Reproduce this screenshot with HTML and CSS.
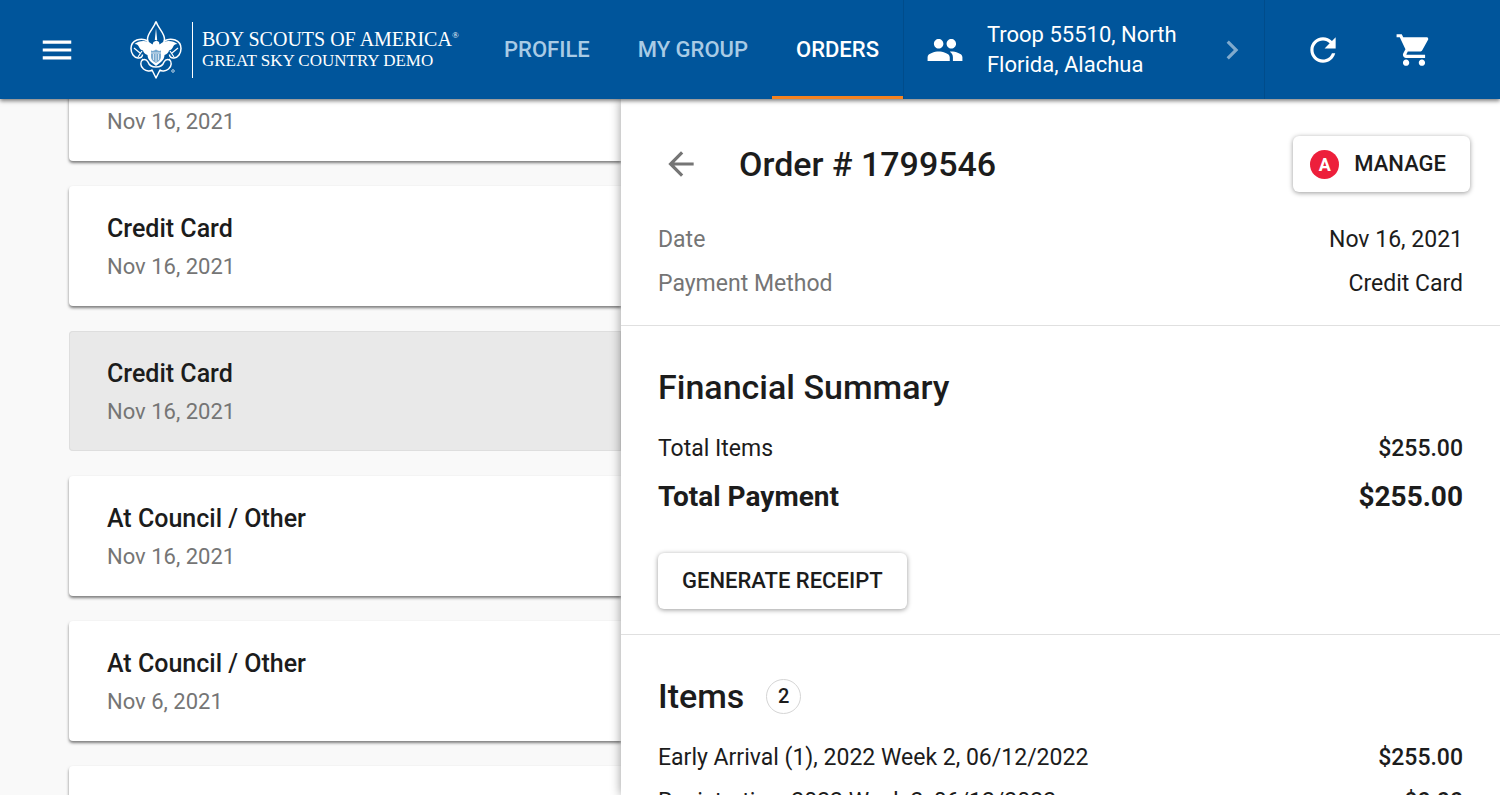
FILE: index.html
```html
<!DOCTYPE html>
<html lang="en">
<head>
<meta charset="utf-8">
<meta name="viewport" content="width=device-width, initial-scale=1">
<title>Order # 1799546</title>
<link rel="stylesheet" href="styles.css">
</head>
<body>
<header class="topbar">
  <button class="icon-button menu" type="button" aria-label="Menu">
    <svg class="icon" viewBox="0 0 24 24"><path d="M3 18h18v-2H3v2zm0-5h18v-2H3v2zm0-7v2h18V6H3z"/></svg>
  </button>
  <a class="brand" href="#">
    <svg class="emblem" viewBox="0 0 52 60" aria-hidden="true">
      <g fill="none" stroke="#fff" stroke-width="1.500" stroke-linejoin="round">
        <path d="M26 1.500C24 8 17.500 13 17.500 19c0 2 .5 3.500 1.500 5M26 1.500C28 8 34.500 13 34.500 19c0 2-.5 3.500-1.500 5"/>
        <path d="M18 21C11 17 1 20 1 28.500c0 5 3 9 7 9.500 3 .3 4.500-1.500 4.500-3.500M34 21c7-4 17-1 17 7.500 0 5-3 9-7 9.500-3 .3-4.500-1.500-4.500-3.500"/>
        <path d="M13 39c-3 3-3 7 .5 10 3 2.500 7 2.500 8.500 1l4 8 4-8c1.500 1.500 5.500 1.500 8.500-1 3.500-3 3.500-7 .5-10"/>
        <path d="M12 40c3-1 5 0 6 2 1 3 4 5 8 5s7-2 8-5c1-2 3-3 6-2"/>
        <path d="M4 28l6 5M8 37l4-6M48 28l-6 5M44 37l-4-6" stroke-width="1.200"/>
      </g>
      <path fill="#fff" d="M26 8l1.200 12h-2.400zM4.500 24c5-4 13-4 18 .5l1-2.500 3-1.500 2.500 1.500.500 2.500c5-4.500 13-4.500 18-.5-3 0-4 1.500-4.500 3s-2 3-4 3.500c-.5 2-2 4-4.500 4.500 0 3-1.500 5-3.500 7L26 46l-5-4c-2-2-3.500-4-3.500-7-2.500-.5-4-2.500-4.500-4.500-2-.5-3.500-2-4-3.500s-1.500-3-4.500-3z"/>
      <path fill="#78a9cf" d="M21 30.500c2 1 3 .2 5-1 2 1.200 3 2 5 1V37c0 3-3 5-5 6-2-1-5-3-5-6z"/>
      <path fill="none" stroke="#fff" stroke-width=".7" d="M21 33h10M23.500 34v6M26 34v8M28.500 34v6"/>
      <circle cx="43" cy="51" r="1.300" fill="none" stroke="#fff" stroke-width=".7"/>
    </svg>
    <span class="brand-text">
      <span class="brand-name">BOY SCOUTS OF AMERICA<sup class="mark">®</sup></span>
      <span class="brand-unit">GREAT SKY COUNTRY DEMO</span>
    </span>
  </a>
  <nav class="tabs">
    <a class="tab" href="#">PROFILE</a>
    <a class="tab" href="#">MY GROUP</a>
    <a class="tab tab-active" href="#" aria-current="page">ORDERS</a>
  </nav>
  <button class="group" type="button">
    <svg class="icon" viewBox="0 0 24 24"><path d="M16 11c1.660 0 2.990-1.340 2.990-3S17.660 5 16 5s-3 1.340-3 3 1.340 3 3 3zm-8 0c1.660 0 2.990-1.340 2.990-3S9.660 5 8 5 5 6.340 5 8s1.340 3 3 3zm0 2c-2.330 0-7 1.170-7 3.500V19h14v-2.500C15 14.170 10.330 13 8 13zm8 0c-.29 0-.62.020-.97.050 1.160.84 1.970 1.970 1.970 3.450V19h6v-2.500c0-2.330-4.670-3.500-7-3.500z"/></svg>
    <span class="group-name">Troop 55510, North Florida, Alachua</span>
    <svg class="icon chevron" viewBox="0 0 24 24"><path d="M10 6L8.590 7.410 13.170 12l-4.580 4.590L10 18l6-6z"/></svg>
  </button>
  <div class="actions">
    <button class="icon-button" type="button" aria-label="Refresh">
      <svg class="icon" viewBox="0 0 24 24"><path d="M17.650 6.350C16.200 4.900 14.210 4 12 4c-4.420 0-7.990 3.580-7.990 8s3.570 8 7.990 8c3.730 0 6.840-2.550 7.730-6h-2.080c-.82 2.330-3.040 4-5.650 4-3.310 0-6-2.690-6-6s2.690-6 6-6c1.660 0 3.140.69 4.220 1.780L13 11h7V4l-2.350 2.350z"/></svg>
    </button>
    <button class="icon-button" type="button" aria-label="Cart">
      <svg class="icon" viewBox="0 0 24 24"><path d="M7 18c-1.100 0-1.990.9-1.990 2S5.900 22 7 22s2-.9 2-2-.9-2-2-2zM1 2v2h2l3.600 7.590-1.350 2.450c-.16.280-.25.610-.25.960 0 1.100.9 2 2 2h12v-2H7.420c-.14 0-.25-.11-.25-.25l.03-.12.9-1.630h7.450c.75 0 1.410-.41 1.750-1.030l3.580-6.490c.08-.14.12-.31.12-.48 0-.55-.45-1-1-1H5.210l-.94-2H1zm16 16c-1.100 0-1.990.9-1.990 2s.89 2 1.990 2 2-.9 2-2-.9-2-2-2z"/></svg>
    </button>
  </div>
</header>
<main class="content">
  <section class="orders" aria-label="Orders">
    <ul class="order-list">
      <li><a class="card" href="#"><span class="card-title">Credit Card</span><span class="card-date">Nov 16, 2021</span></a></li>
      <li><a class="card" href="#"><span class="card-title">Credit Card</span><span class="card-date">Nov 16, 2021</span></a></li>
      <li><a class="card card-selected" href="#"><span class="card-title">Credit Card</span><span class="card-date">Nov 16, 2021</span></a></li>
      <li><a class="card" href="#"><span class="card-title">At Council / Other</span><span class="card-date">Nov 16, 2021</span></a></li>
      <li><a class="card" href="#"><span class="card-title">At Council / Other</span><span class="card-date">Nov 6, 2021</span></a></li>
      <li><a class="card" href="#"><span class="card-title">At Council / Other</span><span class="card-date">Nov 6, 2021</span></a></li>
    </ul>
  </section>
  <article class="detail">
    <section class="block">
      <div class="detail-head">
        <button class="icon-button back" type="button" aria-label="Back">
          <svg class="icon" viewBox="0 0 24 24"><path d="M20 11H7.830l5.590-5.590L12 4l-8 8 8 8 1.410-1.410L7.830 13H20v-2z"/></svg>
        </button>
        <h1 class="heading">Order # 1799546</h1>
        <button class="raised manage" type="button"><span class="admin">A</span>MANAGE</button>
      </div>
      <dl class="rows meta">
        <div class="row"><dt>Date</dt><dd>Nov 16, 2021</dd></div>
        <div class="row"><dt>Payment Method</dt><dd>Credit Card</dd></div>
      </dl>
    </section>
    <section class="block">
      <h2 class="heading">Financial Summary</h2>
      <dl class="rows">
        <div class="row"><dt>Total Items</dt><dd class="amount">$255.00</dd></div>
        <div class="row total"><dt>Total Payment</dt><dd>$255.00</dd></div>
      </dl>
      <button class="raised receipt" type="button">GENERATE RECEIPT</button>
    </section>
    <section class="block">
      <h2 class="heading">Items <span class="count">2</span></h2>
      <dl class="rows">
        <div class="row"><dt>Early Arrival (1), 2022 Week 2, 06/12/2022</dt><dd class="amount">$255.00</dd></div>
        <div class="row"><dt>Registration, 2022 Week 2, 06/12/2022</dt><dd class="amount">$0.00</dd></div>
      </dl>
    </section>
  </article>
</main>
</body>
</html>
```
FILE: styles.css
```css
* {
  box-sizing: border-box;
}

body {
  display: flex;
  flex-direction: column;
  height: 100vh;
  margin: 0;
  overflow: hidden;
  background: #f9f9f9;
  color: #1c1c1c;
  font: 400 23px/32px Roboto, sans-serif;
}

button {
  border: 0;
  background: none;
  color: inherit;
  font: inherit;
  cursor: pointer;
}

a {
  color: inherit;
  text-decoration: none;
}

.icon {
  display: block;
  flex: none;
  width: 38px;
  height: 38px;
  fill: currentColor;
}

.icon-button {
  flex: none;
  padding: 0;
}

.topbar {
  position: relative;
  z-index: 2;
  display: flex;
  flex: none;
  align-items: center;
  height: 99px;
  padding-left: 38px;
  background: #00559b;
  box-shadow: 0 2px 4px rgba(0, 0, 0, .5);
  color: #fff;
}

.brand {
  display: flex;
  flex: none;
  align-items: center;
  gap: 10px;
  width: 350px;
  margin-left: 54px;
}

.emblem {
  width: 52px;
  height: 60px;
}

.brand-text {
  display: flex;
  flex-direction: column;
  padding: 6px 0 6px 9px;
  border-left: 1px solid #fff;
  font-family: "Liberation Serif", serif;
  white-space: nowrap;
}

.brand-name {
  font-size: 20px;
  line-height: 22px;
}

.mark {
  font-size: 9px;
  line-height: 0;
  vertical-align: 8px;
}

.brand-unit {
  font-size: 17px;
  line-height: 22px;
}

.tabs {
  display: flex;
  flex: none;
  align-self: stretch;
}

.tab {
  display: flex;
  align-items: center;
  padding: 3px 24px 0;
  border-bottom: 3px solid transparent;
  color: #a9cbe5;
  font-size: 22px;
  font-weight: 500;
}

.tab-active {
  border-color: #f5821f;
  color: #fff;
}

.group {
  display: flex;
  flex: 0 1 362px;
  align-items: center;
  align-self: stretch;
  gap: 23px;
  padding: 0 13px 0 22px;
  border: 1px solid #004c8b;
  border-width: 0 1px;
  font-size: 22px;
  line-height: 30px;
  text-align: left;
}

.group-name {
  flex: 1;
}

.chevron {
  opacity: .5;
}

.actions {
  display: flex;
  gap: 53px;
  padding-left: 39px;
}

.content {
  display: grid;
  flex: 1;
  grid-template-columns: minmax(0, 621fr) minmax(0, 879fr);
  min-height: 0;
}

.orders {
  overflow: hidden;
  padding-left: 69px;
}

.order-list {
  display: flex;
  flex-direction: column;
  gap: 25px;
  margin: -58px 0 0;
  padding: 0;
  list-style: none;
}

.card {
  display: flex;
  flex-direction: column;
  gap: 6px;
  padding: 27px 38px 23px;
  border-radius: 4px 0 0 4px;
  background: #fff;
  box-shadow: 0 2px 3px rgba(0, 0, 0, .5);
}

.card-selected {
  background: #e9e9e9;
  box-shadow: inset 0 0 0 1px #dedede;
}

.card-title {
  font-size: 25px;
  font-weight: 500;
}

.card-date {
  color: #757575;
  font-size: 22px;
}

.detail {
  z-index: 1;
  overflow: hidden;
  background: #fff;
  box-shadow: 0 0 10px rgba(0, 0, 0, .4);
}

.block {
  padding: 41px 37px 25px;
}

.block:first-child {
  padding: 37px 37px 20px;
}

.block + .block {
  border-top: 1px solid #e0e0e0;
}

.detail-head {
  display: flex;
  align-items: center;
  margin: 0 -7px 25px 0;
}

.back {
  margin: 0 39px 0 4px;
  color: #757575;
}

.heading {
  display: flex;
  align-items: center;
  gap: 22px;
  margin: 0;
  font-size: 34px;
  font-weight: 500;
  line-height: 40px;
}

.raised {
  display: flex;
  align-items: center;
  height: 56px;
  padding: 0 24px;
  border-radius: 6px;
  background: #fff;
  box-shadow: 0 1px 5px rgba(0, 0, 0, .4);
  font-size: 22px;
  font-weight: 500;
}

.manage {
  gap: 15px;
  margin-left: auto;
  padding-left: 17px;
}

.admin {
  width: 29px;
  border-radius: 50%;
  background: #ed1f3b;
  color: #fff;
  font-size: 18px;
  font-weight: 700;
  line-height: 29px;
  text-align: center;
}

.rows {
  margin: 19px 0 0;
}

.row {
  display: flex;
  align-items: center;
  justify-content: space-between;
  height: 44px;
  padding-top: 2px;
}

.row dd {
  margin: 0;
}

.meta dt {
  color: #757575;
}

.amount {
  font-weight: 500;
}

.total {
  height: 52px;
  font-size: 28px;
  font-weight: 700;
}

.receipt {
  margin-top: 31px;
}

.count {
  width: 35px;
  border: 1px solid #d5d5d5;
  border-radius: 50%;
  font-size: 20px;
  line-height: 33px;
  text-align: center;
}
```
